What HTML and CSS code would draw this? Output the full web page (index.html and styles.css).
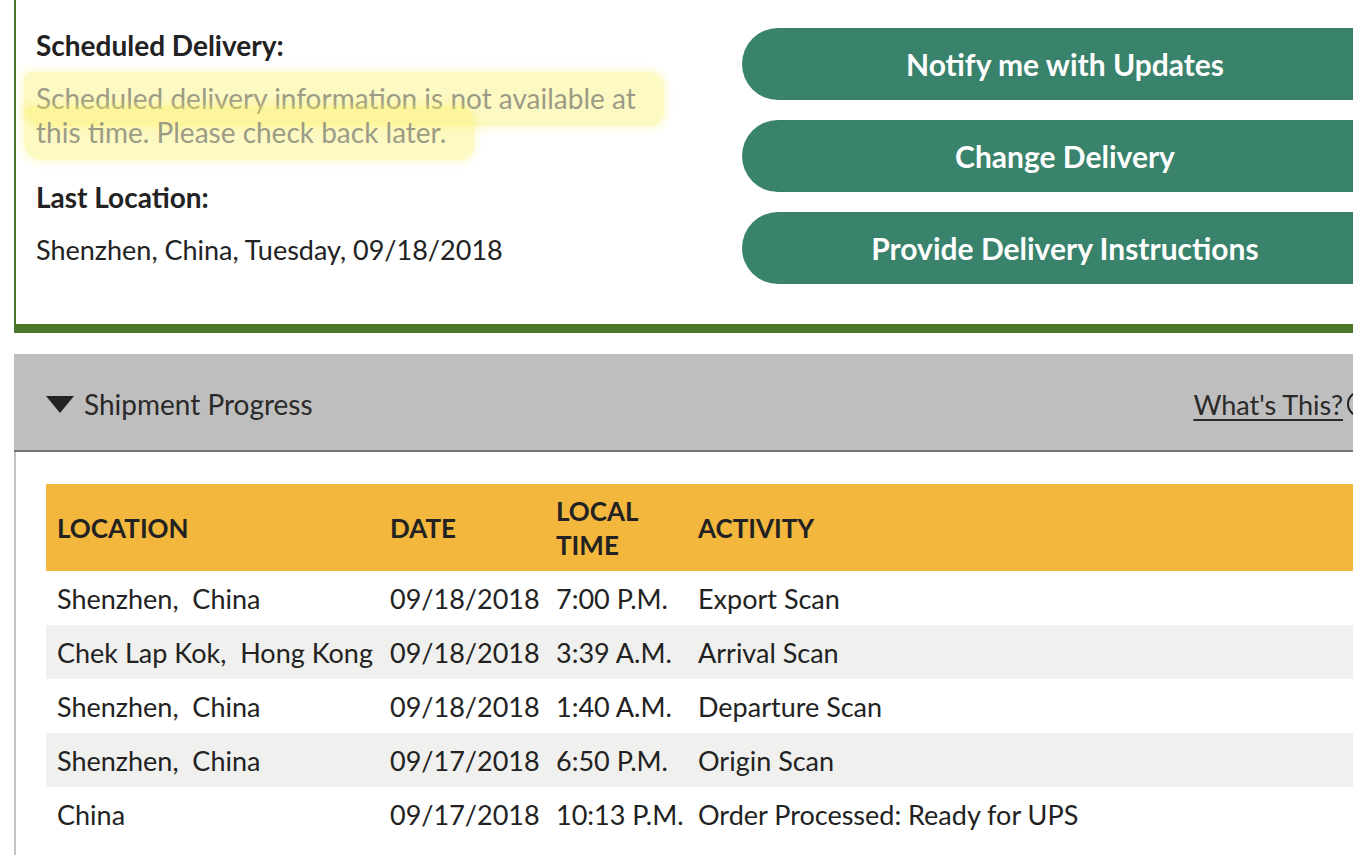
FILE: index.html
```html
<!DOCTYPE html>
<html lang="en">
<head>
<meta charset="utf-8">
<title>Shipment Progress</title>
<link rel="stylesheet" href="styles.css">
</head>
<body>
<div class="page">
  <section class="summary">
    <div class="info">
      <h3 class="label">Scheduled Delivery:</h3>
      <p class="muted"><span class="highlight">Scheduled delivery information is not available at this time. Please check back later.</span></p>
      <h3 class="label label-gap">Last Location:</h3>
      <p class="value">Shenzhen, China, Tuesday, 09/18/2018</p>
    </div>
    <div class="actions">
      <a class="btn" href="#">Notify me with Updates</a>
      <a class="btn" href="#">Change Delivery</a>
      <a class="btn" href="#">Provide Delivery Instructions</a>
    </div>
  </section>

  <section class="progress">
    <div class="progress-head">
      <div class="toggle"><span class="caret"></span><span>Shipment Progress</span></div>
      <div class="help"><a href="#" class="help-link">What's This?</a><span class="help-icon"></span></div>
    </div>
    <div class="progress-body">
      <table class="scans">
        <thead>
          <tr>
            <th class="c-loc">LOCATION</th>
            <th class="c-date">DATE</th>
            <th class="c-time">LOCAL TIME</th>
            <th class="c-act">ACTIVITY</th>
          </tr>
        </thead>
        <tbody>
          <tr><td>Shenzhen,&nbsp; China</td><td>09/18/2018</td><td>7:00 P.M.</td><td>Export Scan</td></tr>
          <tr><td>Chek Lap Kok,&nbsp; Hong Kong</td><td>09/18/2018</td><td>3:39 A.M.</td><td>Arrival Scan</td></tr>
          <tr><td>Shenzhen,&nbsp; China</td><td>09/18/2018</td><td>1:40 A.M.</td><td>Departure Scan</td></tr>
          <tr><td>Shenzhen,&nbsp; China</td><td>09/17/2018</td><td>6:50 P.M.</td><td>Origin Scan</td></tr>
          <tr><td>China</td><td>09/17/2018</td><td>10:13 P.M.</td><td>Order Processed: Ready for UPS</td></tr>
        </tbody>
      </table>
    </div>
  </section>
</div>
</body>
</html>
```

FILE: styles.css
```css
html, body {
  margin: 0;
  padding: 0;
  overflow: hidden;
  background: #ffffff;
}

body {
  font-family: Lato, "Open Sans", sans-serif;
  color: #222222;
}

.page {
  width: 1390px;
}

/* ---------- summary ---------- */
.summary {
  margin-left: 14px;
  border-left: 2px solid #4a7729;
  border-bottom: 9px solid #4a7729;
  display: flex;
}

.info {
  width: 706px;
  padding: 30px 0 0 20px;
}

.label {
  margin: 0;
  font-size: 28px;
  line-height: 30px;
  font-weight: 700;
  color: #222222;
}

.label-gap {
  margin-top: 33px;
}

.muted {
  margin: 21px 0 0 0;
  font-size: 28px;
  line-height: 34px;
  color: #9c9c86;
  max-width: 615px;
}

.highlight {
  background: rgba(250, 238, 90, 0.36);
  -webkit-box-decoration-break: clone;
  box-decoration-break: clone;
  padding: 9px 28px 11px 12px;
  margin-left: -12px;
  border-radius: 8px 16px 14px 18px;
  box-shadow: 0 0 7px 3px rgba(250, 238, 90, 0.26);
}

.value {
  margin: 21px 0 0 0;
  font-size: 27px;
  line-height: 34px;
  color: #222222;
}

.actions {
  width: 646px;
  padding: 28px 0 40px 0;
  display: flex;
  flex-direction: column;
  gap: 20px;
}

.btn {
  display: flex;
  align-items: center;
  justify-content: center;
  height: 72px;
  border-radius: 36px 0 0 36px;
  background: #39826b;
  color: #ffffff;
  text-decoration: none;
  font-size: 30px;
  font-weight: 700;
}

/* ---------- progress ---------- */
.progress {
  margin-top: 21px;
  margin-left: 14px;
}

.progress-head {
  box-sizing: border-box;
  height: 98px;
  padding: 4px 17px 0 32px;
  background: #bebebe;
  border-bottom: 2px solid #747474;
  display: flex;
  align-items: center;
  justify-content: space-between;
}

.toggle {
  display: flex;
  align-items: center;
  gap: 10px;
  font-size: 28px;
  color: #2a2a2a;
}

.caret {
  width: 0;
  height: 0;
  border-left: 14px solid transparent;
  border-right: 14px solid transparent;
  border-top: 17px solid #222222;
}

.help {
  display: flex;
  align-items: center;
  gap: 4px;
  font-size: 27px;
}

.help-link {
  color: #2a2a2a;
  text-decoration: underline;
  text-underline-offset: 4px;
  text-decoration-thickness: 2px;
}

.help-icon {
  width: 22px;
  height: 22px;
  border: 2px solid #222222;
  border-radius: 50%;
}

.progress-body {
  border-left: 2px solid #c2c2c2;
  padding: 32px 0 40px 30px;
  min-height: 380px;
}

.scans {
  width: 100%;
  table-layout: fixed;
  border-collapse: collapse;
  font-size: 27px;
}

.scans th {
  box-sizing: border-box;
  background: #f4b73d;
  height: 87px;
  text-align: left;
  vertical-align: middle;
  font-size: 26px;
  line-height: 34px;
  font-weight: 700;
  color: #222222;
  padding: 0 10px;
}

.scans td {
  height: 54px;
  padding: 0 10px;
  vertical-align: middle;
  white-space: nowrap;
  color: #222222;
}

.scans th:first-child,
.scans td:first-child {
  padding-left: 11px;
}

.scans tbody tr:nth-child(even) td {
  background: #f0f0ee;
}

.c-loc { width: 334px; }
.c-date { width: 166px; }
.c-time { width: 142px; }
```
